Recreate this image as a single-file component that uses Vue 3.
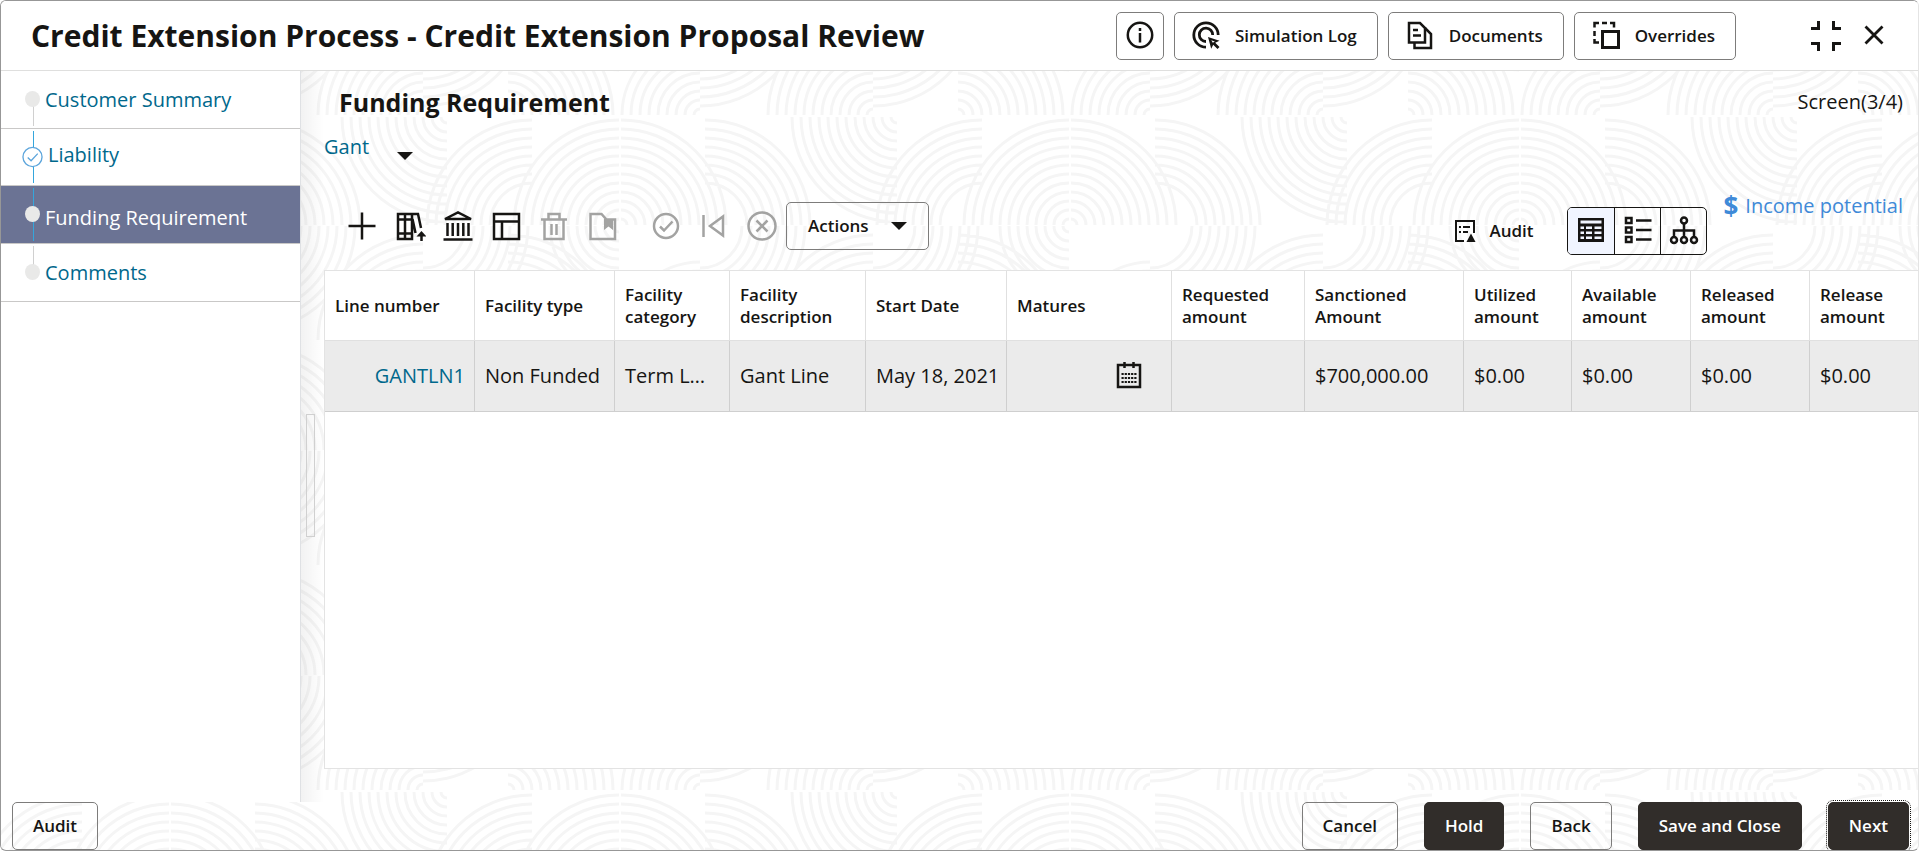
<script setup>
import { ref } from 'vue'

const steps = [
  { label: 'Customer Summary', state: 'first' },
  { label: 'Liability', state: 'done' },
  { label: 'Funding Requirement', state: 'active' },
  { label: 'Comments', state: 'last' }
]

const columns = [
  { title: 'Line number', width: 150 },
  { title: 'Facility type', width: 140 },
  { title: 'Facility category', width: 115 },
  { title: 'Facility description', width: 136 },
  { title: 'Start Date', width: 141 },
  { title: 'Matures', width: 165 },
  { title: 'Requested amount', width: 133 },
  { title: 'Sanctioned Amount', width: 159 },
  { title: 'Utilized amount', width: 108 },
  { title: 'Available amount', width: 119 },
  { title: 'Released amount', width: 119 },
  { title: 'Release amount', width: 109 }
]

const amounts = ['$700,000.00', '$0.00', '$0.00', '$0.00', '$0.00']
const view = ref('table')

// Background tile: quarter arcs fanning out from a corner of each cell.
// sx / sy give the direction of the fan from its centre.
const TILE_W = 450
const fans = [
  { x: 253, y: 114, sx: -1, sy: -1, from: 6, to: 84 },
  { x: 253, y: 0, sx: 1, sy: 1, from: 42, to: 108 },
  { x: 426, y: 114, sx: -1, sy: -1, from: 6, to: 108 },
  { x: 426, y: 0, sx: 1, sy: 1, from: 42, to: 108 },
  { x: 61, y: 114, sx: 1, sy: -1, from: 6, to: 108 },
  { x: 172, y: 0, sx: -1, sy: 1, from: 6, to: 76 },
  { x: 450, y: 116, sx: -1, sy: 1, from: 6, to: 108 },
  { x: 172, y: 224, sx: -1, sy: -1, from: 6, to: 108 },
  { x: 174, y: 224, sx: 1, sy: -1, from: 6, to: 108 },
  { x: 85, y: 224, sx: -1, sy: -1, from: 42, to: 108 },
  { x: 258, y: 224, sx: 1, sy: -1, from: 42, to: 108 }
]
const arcs = []
for (const f of fans) {
  for (let r = f.from; r <= f.to; r += 9) {
    const sweep = f.sx * f.sy > 0 ? 1 : 0
    for (const dx of [-TILE_W, 0, TILE_W]) {
      const x = f.x + dx
      if (x + 115 < 0 || x - 115 > TILE_W) continue
      arcs.push(`M${x + f.sx * r} ${f.y}A${r} ${r} 0 0 ${sweep} ${x} ${f.y + f.sy * r}`)
    }
  }
}
const texture = arcs.join('')
</script>

<template>
  <div class="window">
    <svg class="texture" aria-hidden="true">
      <defs>
        <pattern id="waves" x="-4" y="0" width="450" height="225" patternUnits="userSpaceOnUse">
          <path :d="texture" fill="none" stroke="#f5f5f5" stroke-width="3" />
        </pattern>
      </defs>
      <rect width="100%" height="100%" fill="url(#waves)" />
    </svg>

    <header class="titlebar">
      <h1>Credit Extension Process - Credit Extension Proposal Review</h1>
      <div class="title-actions">
        <button class="btn square" type="button" aria-label="Information">
          <svg class="icon" viewBox="0 0 32 32"><circle cx="16" cy="15" r="12.2" /><path d="M16 13v9.500M16 8v3" /></svg>
        </button>
        <button class="btn with-icon" type="button">
          <svg class="icon" viewBox="0 0 32 32">
            <path d="M16 27.200A12.200 12.200 0 1 1 28.200 15M16 21.500A6.700 6.700 0 1 1 22.700 15" stroke-width="2.800" />
            <path d="M18 17l11.500 3.700-4.300 2 4.300 4.300-2 2-4.300-4.300-2 4z" fill="currentColor" stroke="none" />
            <path d="M21.300 20.300l3.500 1.200-2 1.200z" fill="#fff" stroke="none" />
          </svg>
          Simulation Log
        </button>
        <button class="btn with-icon" type="button">
          <svg class="icon" viewBox="0 0 32 32">
            <path d="M5 3h11l5 5v14.500H5zM9 10h5M9 15.500h8" />
            <path d="M10.500 23v5H27V14l-6-6" />
          </svg>
          Documents
        </button>
        <button class="btn with-icon" type="button">
          <svg class="icon" viewBox="0 0 32 32">
            <path d="M12.500 11.500h16v16h-16z" stroke-width="3" />
            <path d="M4.500 7.500v-4.500H9M12 3h5M20 3h4v4.500M4.500 11v5M4.500 19v3.500H9" />
          </svg>
          Overrides
        </button>
        <div class="window-controls">
          <button class="bare" type="button" aria-label="Restore window">
            <svg class="icon" viewBox="0 0 32 32"><path d="M1 8.500h7.500V1M31 8.500h-7.500V1M1 23.500h7.500V31M31 23.500h-7.500V31" stroke-width="3" /></svg>
          </button>
          <button class="bare" type="button" aria-label="Close">
            <svg class="icon" viewBox="0 0 32 32"><path d="M7.500 6.500l17 17M24.500 6.500l-17 17" stroke-width="2.800" /></svg>
          </button>
        </div>
      </div>
    </header>

    <div class="body">
      <nav class="steps" aria-label="Process steps">
        <ol>
          <li v-for="s in steps" :key="s.label" :class="s.state">
            <span class="track"><span class="line"></span>
              <svg v-if="s.state === 'done'" class="check" viewBox="0 0 22 22"><circle cx="11" cy="11" r="10" /><path d="M6 11.500l3.500 3.500 7-7.500" /></svg>
              <span v-else class="dot"></span>
            </span>
            <a href="#">{{ s.label }}</a>
          </li>
        </ol>
      </nav>

      <div class="gutter"><div class="handle"></div></div>

      <main class="content">
        <div class="heading">
          <h2>Funding Requirement</h2>
          <span class="screen">Screen(3/4)</span>
        </div>

        <div class="party">
          <a href="#">Gant</a>
          <button class="bare caret" type="button" aria-label="Choose party">
            <svg width="16" height="8" viewBox="0 0 16 8"><path d="M0 0h16L8 8z" fill="currentColor" /></svg>
          </button>
        </div>

        <div class="toolbar">
          <div class="tools">
            <button class="bare" type="button" aria-label="Add">
              <svg class="icon" viewBox="0 0 32 32"><path d="M16 2.500v27M2.500 16h27" /></svg>
            </button>
            <button class="bare" type="button" aria-label="Add existing line">
              <svg class="icon" viewBox="0 0 32 32">
                <path d="M4 4h14v25H4zM11 4v25M4 9.500h14M4 23.500h14M18 4h6l3 14M18.500 9l3 14" />
                <path d="M27.500 31v-8" /><path d="M22.500 26.500l5-5.500 5 5.500z" fill="currentColor" stroke="none" />
              </svg>
            </button>
            <button class="bare" type="button" aria-label="Collateral">
              <svg class="icon" viewBox="0 0 32 32"><path d="M3 9h26L16 2.500zM1.500 29.500h29" /><path d="M5.500 13v13M10.700 13v13M16 13v13M21.300 13v13M26.500 13v13" /></svg>
            </button>
            <button class="bare" type="button" aria-label="Layout">
              <svg class="icon" viewBox="0 0 32 32"><path d="M4 4h25v25H4zM4 11.500h25M12 11.500V29" /></svg>
            </button>
            <button class="bare" type="button" disabled aria-label="Delete">
              <svg class="icon" viewBox="0 0 32 32"><path d="M3 9.500h26M10.500 9V4h11v5M6.500 9.500V29h19V9.500M13.500 14v11M18.500 14v11" /></svg>
            </button>
            <button class="bare" type="button" disabled aria-label="Saved items">
              <svg class="icon" viewBox="0 0 32 32"><path d="M4.500 4h11l5 5.500h8.500V29H4.500z" /><path d="M18 9h9v11l-4.500-3.500L18 20z" fill="currentColor" stroke="none" /></svg>
            </button>
            <span class="break"></span>
            <button class="bare" type="button" disabled aria-label="Accept">
              <svg class="icon" viewBox="0 0 32 32"><circle cx="16" cy="16" r="12" /><path d="M10 16.500l4 4 8.500-9" /></svg>
            </button>
            <button class="bare" type="button" disabled aria-label="Previous">
              <svg class="icon" viewBox="0 0 32 32"><path d="M5.500 5v22M25 6.500v19L12 16z" /></svg>
            </button>
            <button class="bare" type="button" disabled aria-label="Reject">
              <svg class="icon" viewBox="0 0 32 32"><circle cx="16" cy="16" r="13.500" /><path d="M10.500 10.500l11 11M21.500 10.500l-11 11" /></svg>
            </button>
            <button class="btn actions" type="button">
              Actions
              <svg width="16" height="8" viewBox="0 0 16 8"><path d="M0 0h16L8 8z" fill="currentColor" /></svg>
            </button>
          </div>

          <div class="views">
            <button class="bare audit" type="button">
              <svg class="icon small" viewBox="0 0 24 24">
                <path d="M11 22H3V2h18v12" stroke-width="2" />
                <path d="M6 8h2M10 8h7M6 13h2M10 13h5" stroke-width="2" />
                <path d="M18 14.500L22.500 23h-9z" fill="currentColor" stroke="none" />
              </svg>
              Audit
            </button>
            <div class="segmented" role="group" aria-label="View">
              <button type="button" :aria-pressed="view === 'table'" aria-label="Table view" @click="view = 'table'">
                <svg class="icon" viewBox="0 0 32 32">
                  <path d="M3 3h26v24H3z" fill="currentColor" stroke="none" />
                  <path d="M5.500 5.500h21v3h-21zM5.500 11.500H9v2.500H5.500zM11 11.500h6v2.500h-6zM19.500 11.500h7v2.500h-7zM5.500 16.500H9V19H5.500zM11 16.500h6V19h-6zM19.500 16.500h7V19h-7zM5.500 21.500H9V24H5.500zM11 21.500h6V24h-6zM19.500 21.500h7V24h-7z" fill="#f1f5ff" stroke="none" />
                </svg>
              </button>
              <button type="button" :aria-pressed="view === 'list'" aria-label="List view" @click="view = 'list'">
                <svg class="icon" viewBox="0 0 32 32"><path d="M4 3h5.500v5H4zM4 12.500h5.500v5H4zM4 22h5.500v5H4zM14 5.500h15.500M14 15h15.500M14 24.500h15.500" /></svg>
              </button>
              <button type="button" :aria-pressed="view === 'tree'" aria-label="Tree view" @click="view = 'tree'">
                <svg class="icon" viewBox="0 0 32 32"><circle cx="16" cy="5.500" r="3" /><circle cx="6" cy="25" r="3" /><circle cx="16" cy="25" r="3" /><circle cx="26" cy="25" r="3" /><path d="M16 8.500V22M6 22v-6.500h20V22" /></svg>
              </button>
            </div>
            <a class="income" href="#"><b>$</b>Income potential</a>
          </div>
        </div>

        <div class="panel">
          <table>
            <colgroup>
              <col v-for="c in columns" :key="c.title" :style="{ width: c.width + 'px' }" />
            </colgroup>
            <thead>
              <tr><th v-for="c in columns" :key="c.title" scope="col">{{ c.title }}</th></tr>
            </thead>
            <tbody>
              <tr>
                <td class="number"><a href="#">GANTLN1</a></td>
                <td>Non Funded</td>
                <td class="category">Term Loan</td>
                <td>Gant Line</td>
                <td class="start">May 18, 2021</td>
                <td class="date">
                  <button class="bare" type="button" aria-label="Select maturity date">
                    <svg class="icon" viewBox="0 0 32 32">
                      <path d="M5 5h22v22H5zM11.500 2v6M20.500 2v6" />
                      <path d="M8.500 14h15M8.500 18h15M8.500 22h15" stroke-dasharray="2.200 1" stroke-width="2.200" />
                    </svg>
                  </button>
                </td>
                <td></td>
                <td v-for="(a, i) in amounts" :key="i">{{ a }}</td>
              </tr>
            </tbody>
          </table>
        </div>
      </main>
    </div>

    <footer class="footer">
      <button class="btn" type="button">Audit</button>
      <div class="footer-actions">
        <button class="btn" type="button">Cancel</button>
        <button class="btn dark" type="button">Hold</button>
        <button class="btn" type="button">Back</button>
        <button class="btn dark" type="button">Save and Close</button>
        <button class="btn dark focused" type="button">Next</button>
      </div>
    </footer>
  </div>
</template>

<style>
body {
  background: #fff;
}
</style>

<style scoped>
.window {
  position: relative;
  display: flex;
  flex-direction: column;
  box-sizing: border-box;
  min-height: calc(100vh - 3px);
  border: 1px solid #979797;
  border-right-color: #e4e4e4;
  border-radius: 6px;
  overflow: hidden;
  background: #fff;
  color: #161513;
  font-family: "Open Sans", "Noto Sans", sans-serif;
  font-size: 20px;
  line-height: 24px;
}
.texture {
  position: absolute;
  inset: 0;
  width: 100%;
  height: 100%;
}
.titlebar,
.body,
.footer {
  position: relative;
}
h1, h2 {
  margin: 0;
  font-weight: 700;
}
a {
  color: #00688c;
  text-decoration: none;
}
button {
  margin: 0;
  padding: 0;
  border: 0;
  background: none;
  color: inherit;
  font: inherit;
  cursor: pointer;
}
button:disabled {
  color: #a3a3a2;
}
.icon {
  display: block;
  flex: none;
  width: 32px;
  height: 32px;
  fill: none;
  stroke: currentColor;
  stroke-width: 2.500;
}
.icon.small {
  width: 24px;
  height: 24px;
}
.btn {
  display: flex;
  align-items: center;
  justify-content: center;
  box-sizing: border-box;
  height: 48px;
  padding: 0 20px;
  border: 1px solid #7d7c7b;
  border-radius: 5px;
  font-size: 17px;
  font-weight: 600;
  white-space: nowrap;
}
.btn.square {
  width: 48px;
  padding: 0;
}
.btn.with-icon {
  gap: 13px;
  padding: 0 20px 0 15px;
}
.btn.dark {
  border-color: #312d2a;
  background: #312d2a;
  color: #fff;
}
.btn.focused {
  outline: 1px dotted #161513;
  outline-offset: 1px;
}
.bare {
  display: flex;
  align-items: center;
  justify-content: center;
  width: 48px;
  height: 48px;
}

.titlebar {
  display: flex;
  align-items: center;
  justify-content: space-between;
  height: 69px;
  padding: 0 20px 0 30px;
  border-bottom: 1px solid #dfdfde;
  background: #fff;
}
h1 {
  font-size: 30px;
  line-height: 40px;
  white-space: nowrap;
}
.title-actions {
  display: flex;
  align-items: center;
  gap: 10px;
}
.window-controls {
  display: flex;
  margin-left: 56px;
}

.body {
  display: grid;
  flex: 1;
  grid-template-columns: 300px 23px minmax(0, 1fr);
}
.steps {
  box-sizing: border-box;
  border-right: 1px solid #dfe1e4;
  background: #fff;
}
.steps ol {
  margin: 0;
  padding: 0;
  list-style: none;
}
.steps li {
  display: flex;
  align-items: center;
  box-sizing: border-box;
  height: 58px;
  padding-left: 21px;
  border-bottom: 1px solid #c9c8c7;
  white-space: nowrap;
}
.steps .done {
  height: 57px;
}
.track {
  position: relative;
  display: flex;
  align-items: center;
  justify-content: center;
  align-self: stretch;
  width: 21px;
  margin-right: 2px;
}
.done .track {
  margin-right: 5px;
}
.done a {
  padding-bottom: 4px;
}
.line {
  position: absolute;
  top: 2px;
  bottom: 2px;
  left: 11px;
  width: 1px;
  background: #35a6dc;
}
.first .line {
  top: 50%;
  background: #d0d0d0;
}
.last .line {
  bottom: 50%;
  background: #d0d0d0;
}
.dot {
  position: relative;
  width: 15px;
  height: 16px;
  margin-bottom: 2px;
  border-radius: 50%;
  background: #e9e9e8;
}
.check {
  position: relative;
  width: 22px;
  height: 22px;
  fill: #fff;
  stroke: #5ea6dc;
  stroke-width: 1.400;
}
.active {
  background: #6b7394;
}
.active a {
  padding-top: 6px;
  color: #fff;
}

.gutter {
  background: linear-gradient(to right, rgba(0, 0, 0, 0.05), rgba(0, 0, 0, 0));
}
.handle {
  box-sizing: border-box;
  width: 9px;
  height: 123px;
  margin: 343px 0 0 5px;
  border: 1px solid #d0d0d0;
}

.content {
  display: flex;
  flex-direction: column;
  padding-bottom: 33px;
}
.heading {
  display: flex;
  align-items: center;
  justify-content: space-between;
  height: 62px;
  padding: 0 15px;
}
h2 {
  font-size: 25px;
  line-height: 32px;
}
.party {
  display: flex;
  align-items: flex-end;
  gap: 28px;
  height: 27px;
  margin-bottom: 32px;
}
.caret {
  width: 16px;
  height: 27px;
  align-items: flex-end;
}
.party a {
  align-self: center;
}
.toolbar {
  display: flex;
  justify-content: space-between;
  height: 78px;
}
.tools {
  display: flex;
  align-items: flex-start;
  padding: 10px 0 0 14px;
}
.break {
  width: 16px;
}
.tools .actions {
  gap: 22px;
  padding: 0 21px;
}
.views {
  display: flex;
  align-items: flex-start;
  padding: 0 15px 0 0;
}
.audit {
  gap: 12px;
  width: auto;
  margin: 15px 34px 0 0;
  font-size: 17px;
  font-weight: 600;
}
.segmented {
  display: flex;
  margin: 15px 16px 0 0;
  border: 1px solid #161513;
  border-radius: 5px;
  overflow: hidden;
}
.segmented button {
  display: flex;
  align-items: center;
  justify-content: center;
  width: 46px;
  height: 46px;
}
.segmented button + button {
  border-left: 1px solid #161513;
}
.segmented button[aria-pressed="true"] {
  background: #f1f5ff;
}
.income {
  display: flex;
  align-items: center;
  gap: 7px;
  height: 28px;
  color: #3f8ad8;
}
.income b {
  font-size: 26px;
}

.panel {
  flex: 1;
  border: 1px solid #e3e3e3;
  border-right: 0;
  background: #fff;
}
table {
  width: 100%;
  border-collapse: separate;
  border-spacing: 0;
  table-layout: fixed;
}
th, td {
  box-sizing: border-box;
  padding: 0 9px 0 10px;
  border-right: 1px solid #e0e0e0;
  border-bottom: 1px solid #e0e0e0;
  text-align: left;
}
th:last-child, td:last-child {
  border-right: 0;
}
th {
  height: 70px;
  font-size: 17px;
  font-weight: 600;
  line-height: 22px;
}
td {
  height: 71px;
  border-color: #cfcfcf;
  overflow: hidden;
  background: #ebebeb;
  text-overflow: ellipsis;
  white-space: nowrap;
}
td.number {
  text-align: right;
}
td.category {
  padding-right: 16px;
}
td.start {
  padding-right: 4px;
}
.date .bare {
  margin-left: auto;
  margin-right: 9px;
}

.footer {
  display: flex;
  justify-content: space-between;
  padding: 0 9px 0 11px;
}
.footer-actions {
  display: flex;
  gap: 26px;
}
</style>
